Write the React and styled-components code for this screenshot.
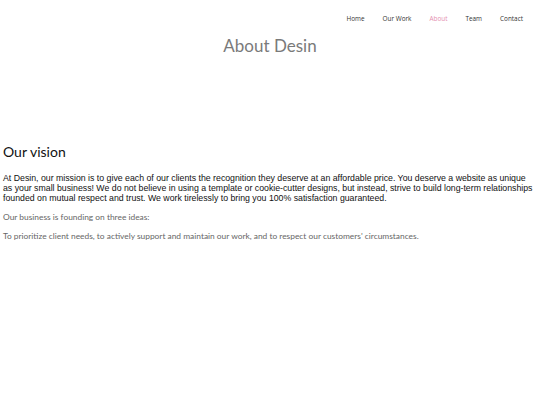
import React from 'react';
import styled, { createGlobalStyle } from 'styled-components';

const Global = createGlobalStyle`
  html, body {
    margin: 0;
    padding: 0;
    background: #fff;
  }
`;

const Page = styled.div`
  width: 540px;
  padding: 0 3px;
  box-sizing: border-box;
`;

const Nav = styled.nav`
  display: flex;
  justify-content: flex-end;
  gap: 18px;
  padding: 14px 14px 0 0;
  font-family: 'Open Sans', sans-serif;
  font-size: 6.4px;
  font-weight: 400;
`;

const NavLink = styled.a`
  color: ${(p) => (p.active ? '#e58fb0' : '#333')};
  text-decoration: none;
  line-height: 10px;
`;

const Title = styled.h1`
  margin: 11px 0 0;
  text-align: center;
  font-family: Lato, sans-serif;
  font-weight: 400;
  font-size: 17px;
  line-height: 22px;
  color: #7a7a7a;
`;

const Section = styled.section`
  margin-top: 86px;
`;

const Heading = styled.h2`
  margin: 0;
  font-family: Lato, sans-serif;
  font-weight: 400;
  font-size: 14px;
  line-height: 18px;
  color: #111;
`;

const Lead = styled.p`
  margin: 12px 0 0;
  font-family: 'Liberation Sans', Arial, sans-serif;
  font-size: 8.75px;
  line-height: 10px;
  color: #111;
`;

const Note = styled.p`
  margin: ${(p) => p.gap}px 0 0;
  font-family: Lato, sans-serif;
  font-weight: 400;
  font-size: 8.4px;
  line-height: 11px;
  color: #666;
`;

export default function App() {
  const links = ['Home', 'Our Work', 'About', 'Team', 'Contact'];
  return (
    <Page>
      <Global />
      <Nav>
        {links.map((l) => (
          <NavLink key={l} href="#" active={l === 'About' ? 1 : 0}>
            {l}
          </NavLink>
        ))}
      </Nav>
      <Title>About Desin</Title>
      <Section>
        <Heading>Our vision</Heading>
        <Lead>
          At Desin, our mission is to give each of our clients the recognition they deserve at an affordable price. You deserve a website as unique as your small business! We do not believe in using a template or cookie-cutter designs, but instead, strive to build long-term relationships founded on mutual respect and trust. We work tirelessly to bring you 100% satisfaction guaranteed.
        </Lead>
        <Note gap={9}>Our business is founding on three ideas:</Note>
        <Note gap={8}>
          To prioritize client needs, to actively support and maintain our work, and to respect our customers' circumstances.
        </Note>
      </Section>
    </Page>
  );
}
